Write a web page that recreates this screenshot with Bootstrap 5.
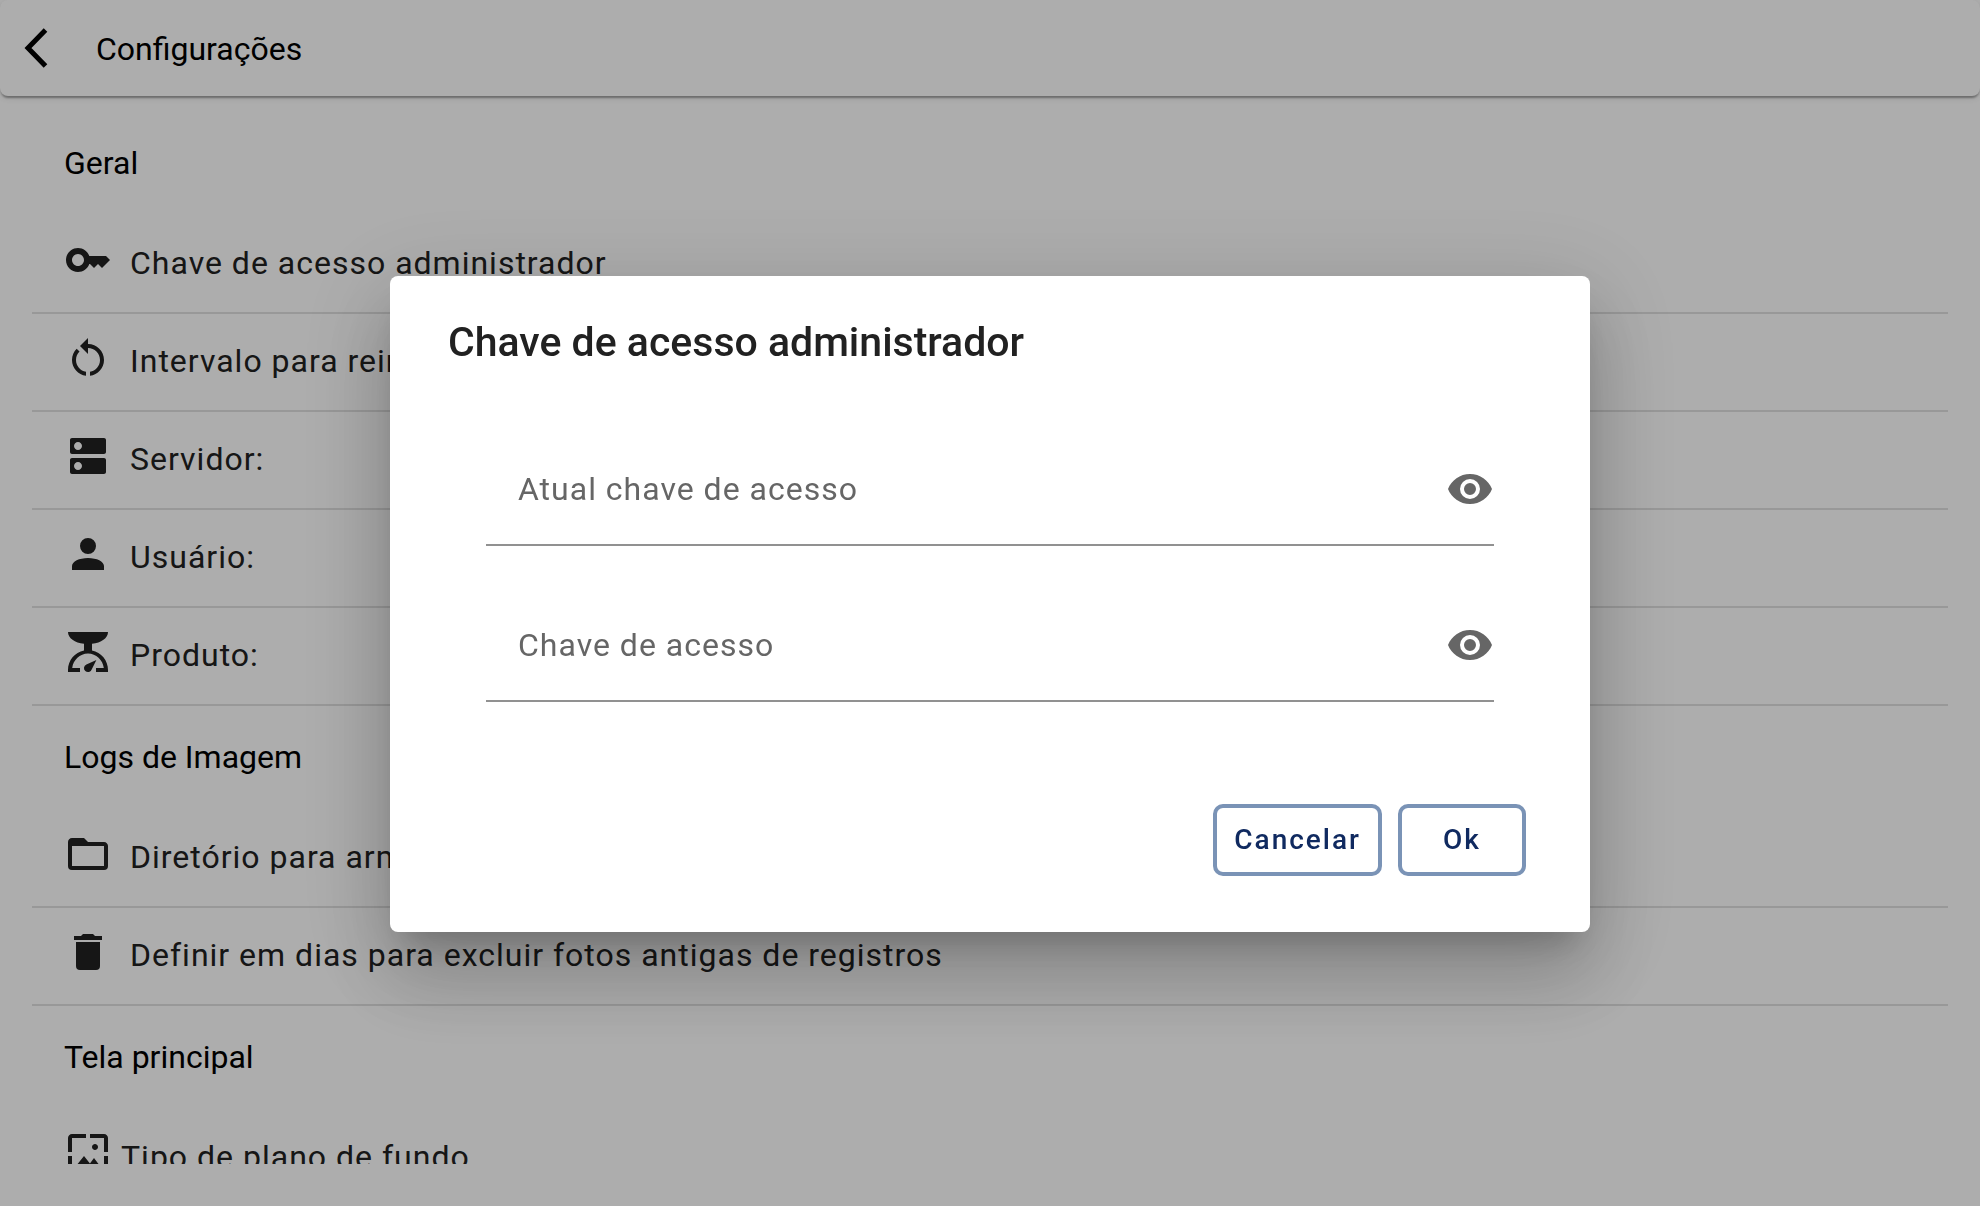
<!DOCTYPE html>
<html lang="pt-BR">
<head>
<meta charset="utf-8">
<meta name="viewport" content="width=device-width, initial-scale=1">
<title>Configurações</title>
<link href="https://cdn.jsdelivr.net/npm/bootstrap@5.3.0/dist/css/bootstrap.min.css" rel="stylesheet">
<style>
  :root { --ink: #212121; --hint: #666; --navy: #102a60; --edge: #7a93b6; }
  body { font-family: Roboto, "Liberation Sans", sans-serif; font-size: 32px; line-height: 48px; color: #000; background: #fff; }
  .topbar { height: 96px; border-radius: 8px; background: #fff; box-shadow: 0 4px 2px -2px rgba(0,0,0,.2), 0 2px 2px rgba(0,0,0,.14), 0 2px 6px rgba(0,0,0,.12); }
  .topbar h1 { font-size: 32px; line-height: 48px; font-weight: 400; padding-top: 2px; }
  .back-btn { width: 72px; height: 72px; border: 0; background: none; }
  .settings { padding: 16px 32px 0; margin-bottom: 42px; }
  .section-title { font-size: 32px; line-height: 48px; font-weight: 400; padding: 27px 32px 29px; }
  .setting, .key-field input { letter-spacing: 1px; }
  .setting { display: flex; align-items: flex-start; gap: 18px; padding: 20px 32px 26px; border: 0; border-bottom: 2px solid rgba(0,0,0,.12); background: none; color: var(--ink); text-align: left; }
  .setting-tight { gap: 9px; }
  .setting span { padding-top: 4px; line-height: 46px; white-space: nowrap; }
  .ico { width: 48px; height: 48px; fill: currentColor; flex: none; display: block; }
  .modal-backdrop { --bs-backdrop-opacity: .32; }
  .key-dialog { max-width: 1200px; margin: 29px auto 27px; }
  .key-dialog .modal-content { border: 0; border-radius: 8px; color: var(--ink); padding: 36px 64px 56px 58px;
    box-shadow: 0 22px 30px -14px rgba(0,0,0,.2), 0 48px 76px 6px rgba(0,0,0,.14), 0 18px 92px 16px rgba(0,0,0,.12); }
  .key-dialog .modal-title { font-size: 41px; line-height: 60px; font-weight: 500; }
  .fields { padding: 62px 32px 102px 38px; gap: 44px; }
  .key-field { height: 112px; border-bottom: 2px solid #919191; color: var(--hint); }
  .key-field input { border: 0; border-radius: 0; background: none; padding: 0 32px; font-size: 32px; line-height: 48px; box-shadow: none; }
  .key-field input::placeholder { color: var(--hint); opacity: 1; }
  .eye-btn { padding: 0; border: 0; background: none; color: var(--hint); }
  .act { height: 72px; border: 4px solid var(--edge); border-radius: 10px; padding: 0 17px; min-width: 128px; font-size: 28px; line-height: 40px; font-weight: 500; letter-spacing: 2px; color: var(--navy); background: #fff; }
</style>
</head>
<body>
<div class="d-flex flex-column vh-100 overflow-hidden">
  <header class="topbar d-flex align-items-center flex-shrink-0">
    <button type="button" class="back-btn p-0 flex-shrink-0" aria-label="Voltar">
      <svg class="d-block" viewBox="0 0 72 72" width="72" height="72" fill="none" stroke="#000" stroke-width="5"><path d="M45.500 18 28 36 45.500 54"/></svg>
    </button>
    <h1 class="mb-0 ms-4">Configurações</h1>
  </header>
  <main class="settings flex-grow-1 overflow-hidden">
    <h2 class="section-title mb-0">Geral</h2>
    <div class="list-group list-group-flush">
      <button type="button" class="setting"><svg class="ico" viewBox="0 0 24 24"><path d="M21 10h-8.350C11.830 7.670 9.610 6 7 6c-3.310 0-6 2.690-6 6s2.690 6 6 6c2.610 0 4.830-1.670 5.650-4H13l2 2 2-2 2 2 4-4.040L21 10zM7 15c-1.650 0-3-1.350-3-3s1.350-3 3-3 3 1.350 3 3-1.350 3-3 3z"/></svg><span>Chave de acesso administrador</span></button>
      <button type="button" class="setting"><svg class="ico" viewBox="0 0 24 24"><path d="M12 5V2L8 6l4 4V7c3.310 0 6 2.690 6 6 0 2.970-2.170 5.430-5 5.910v2.020c3.950-.49 7-3.850 7-7.930 0-4.420-3.580-8-8-8zm-6 8c0-1.650.67-3.150 1.760-4.240L6.340 7.340C4.900 8.790 4 10.790 4 13c0 4.080 3.050 7.440 7 7.930v-2.020c-2.830-.48-5-2.940-5-5.910z"/></svg><span>Intervalo para reiniciar</span></button>
      <button type="button" class="setting"><svg class="ico" viewBox="0 0 24 24"><path d="M20 13H4c-.55 0-1 .45-1 1v6c0 .55.45 1 1 1h16c.55 0 1-.45 1-1v-6c0-.55-.45-1-1-1zM7 19c-1.100 0-2-.9-2-2s.9-2 2-2 2 .9 2 2-.9 2-2 2zM20 3H4c-.55 0-1 .45-1 1v6c0 .55.45 1 1 1h16c.55 0 1-.45 1-1V4c0-.55-.45-1-1-1zM7 9c-1.100 0-2-.9-2-2s.9-2 2-2 2 .9 2 2-.9 2-2 2z"/></svg><span>Servidor:</span></button>
      <button type="button" class="setting"><svg class="ico" viewBox="0 0 24 24"><path d="M12 4a4 4 0 1 1 0 8 4 4 0 0 1 0-8M12 14c4.420 0 8 1.790 8 4v2H4v-2c0-2.210 3.580-4 8-4z"/></svg><span>Usuário:</span></button>
      <button type="button" class="setting"><svg class="ico" viewBox="0 0 24 24"><path d="M2 2h20c0 3-3.400 5.500-8 5.900v3.300c4.600.9 8 4.900 8 9.800v1h-6v-2h3.900c-.5-3.900-3.800-7.200-7.900-7.200S4.600 16.100 4.100 20H8v2H2v-1c0-4.900 3.400-8.900 8-9.800V7.900C5.400 7.500 2 5 2 2zM16.200 16l-2.300 4.600A2 2 0 1 1 11.200 18.200z"/></svg><span>Produto:</span></button>
    </div>
    <h2 class="section-title mb-0">Logs de Imagem</h2>
    <div class="list-group list-group-flush">
      <button type="button" class="setting"><svg class="ico" viewBox="0 0 24 24"><path d="M20 18H4V8h16M20 6h-8l-2-2H4c-1.110 0-2 .89-2 2v12a2 2 0 0 0 2 2h16a2 2 0 0 0 2-2V8c0-1.110-.9-2-2-2z"/></svg><span>Diretório para armazenar</span></button>
      <button type="button" class="setting"><svg class="ico" viewBox="0 0 24 24"><path d="M6 19a2 2 0 0 0 2 2h8a2 2 0 0 0 2-2V7H6v12M19 4h-3.500l-1-1h-5l-1 1H5v2h14V4z"/></svg><span>Definir em dias para excluir fotos antigas de registros</span></button>
    </div>
    <h2 class="section-title mb-0">Tela principal</h2>
    <div class="list-group list-group-flush">
      <button type="button" class="setting setting-tight"><svg class="ico" viewBox="0 0 24 24"><path d="M4 4h7V2H4c-1.100 0-2 .9-2 2v7h2V4zm6 9l-4 5h12l-3-4-2.030 2.710L10 13zm7-4.500c0-.83-.67-1.500-1.500-1.500S14 7.670 14 8.500s.67 1.500 1.500 1.500S17 9.330 17 8.500zM20 2h-7v2h7v7h2V4c0-1.100-.9-2-2-2zm0 18h-7v2h7c1.100 0 2-.9 2-2v-7h-2v7zM4 13H2v7c0 1.100.9 2 2 2h7v-2H4v-7z"/></svg><span>Tipo de plano de fundo</span></button>
    </div>
  </main>
</div>

<div class="modal-backdrop show"></div>
<div class="modal show d-block" role="dialog" aria-modal="true" aria-labelledby="dialog-title">
  <div class="modal-dialog modal-dialog-centered key-dialog">
    <form class="modal-content">
      <h2 class="modal-title" id="dialog-title">Chave de acesso administrador</h2>
      <div class="fields d-flex flex-column">
        <div class="key-field d-flex align-items-center">
          <label class="visually-hidden" for="current-key">Atual chave de acesso</label>
          <input type="password" class="form-control" id="current-key" placeholder="Atual chave de acesso">
          <button type="button" class="eye-btn" aria-label="Mostrar atual chave"><svg class="ico" viewBox="0 0 24 24"><path d="M12 9a3 3 0 1 0 0 6 3 3 0 0 0 0-6m0 8a5 5 0 1 1 0-10 5 5 0 0 1 0 10m0-12.500C7 4.500 2.730 7.610 1 12c1.730 4.390 6 7.500 11 7.500s9.270-3.110 11-7.500c-1.730-4.390-6-7.500-11-7.500z"/></svg></button>
        </div>
        <div class="key-field d-flex align-items-center">
          <label class="visually-hidden" for="new-key">Chave de acesso</label>
          <input type="password" class="form-control" id="new-key" placeholder="Chave de acesso">
          <button type="button" class="eye-btn" aria-label="Mostrar chave"><svg class="ico" viewBox="0 0 24 24"><path d="M12 9a3 3 0 1 0 0 6 3 3 0 0 0 0-6m0 8a5 5 0 1 1 0-10 5 5 0 0 1 0 10m0-12.500C7 4.500 2.730 7.610 1 12c1.730 4.390 6 7.500 11 7.500s9.270-3.110 11-7.500c-1.730-4.390-6-7.500-11-7.500z"/></svg></button>
        </div>
      </div>
      <div class="d-flex justify-content-end gap-3">
        <button type="button" class="btn act">Cancelar</button>
        <button type="submit" class="btn act">Ok</button>
      </div>
    </form>
  </div>
</div>
<script src="https://cdn.jsdelivr.net/npm/bootstrap@5.3.0/dist/js/bootstrap.bundle.min.js"></script>
</body>
</html>
